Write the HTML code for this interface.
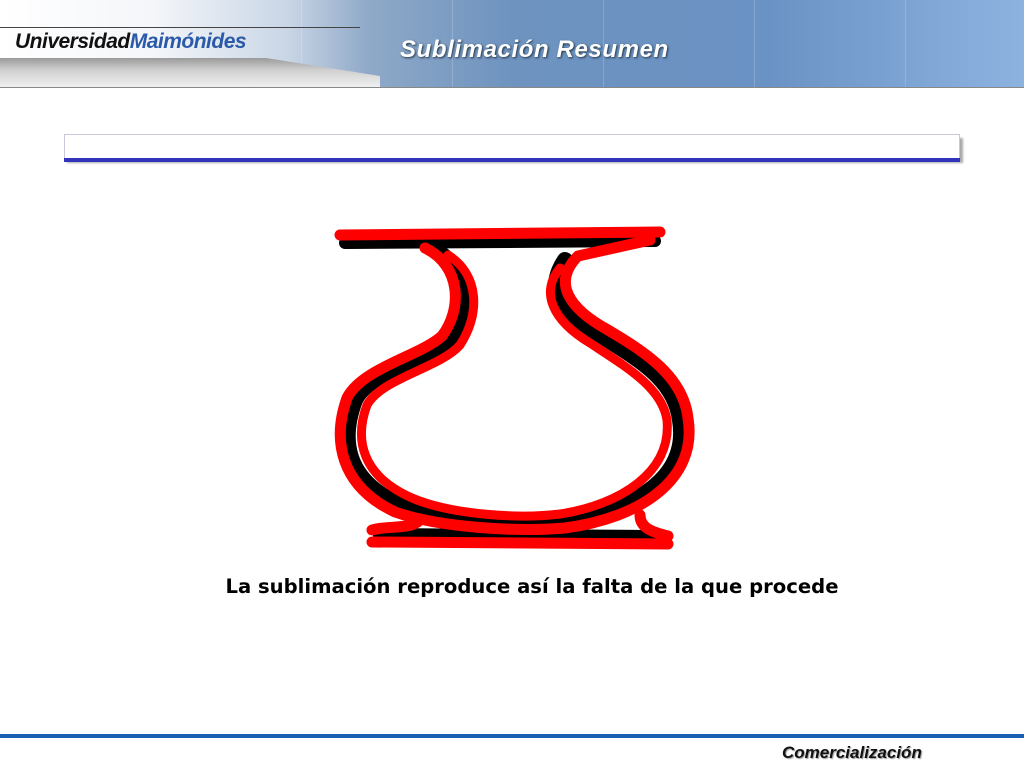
<!DOCTYPE html>
<html><head><meta charset="utf-8"><style>
html,body{margin:0;padding:0;width:1024px;height:768px;overflow:hidden;background:#fff;position:relative;font-family:"Liberation Sans",sans-serif}
.hdr{position:absolute;left:0;top:0;width:1024px;height:88px;background:linear-gradient(90deg,#fff 0%,#f4f6f9 15%,#c9d6e6 28%,#8fa9c8 36%,#6e93bf 50%,#6a92c4 75%,#8cb3e0 100%)}
.hdr .lines{position:absolute;inset:0;background:repeating-linear-gradient(90deg,transparent 0 150px,rgba(255,255,255,.18) 150px 151px)}
.swoosh{position:absolute;left:0;top:58px;width:380px;height:30px;background:linear-gradient(180deg,#9a9a9a 0%,#cfcfcf 40%,#f2f2f2 100%);clip-path:polygon(0 0,70% 0,100% 60%,100% 100%,0 100%)}
.hl{position:absolute;left:0;top:27px;width:360px;height:1px;background:#444}
.hb{position:absolute;left:0;top:87px;width:1024px;height:1px;background:#888}
.logo{position:absolute;left:15px;top:30px;font-size:21px;font-weight:bold;font-style:italic;letter-spacing:-0.5px;color:#111}
.logo span{color:#2a5aa8}
.title{position:absolute;left:400px;top:36px;font-size:24px;font-weight:bold;font-style:italic;letter-spacing:0.6px;color:#fff;text-shadow:1px 1px 2px #234}
.bar{position:absolute;left:64px;top:134px;width:894px;height:24px;border:1px solid #c8c8dc;border-bottom:none;background:#fff;box-shadow:3px 4px 2px #aaa}
.bar2{position:absolute;left:64px;top:158px;width:896px;height:4px;background:#3333bb}
.cap{position:absolute;left:200px;width:664px;top:575px;text-align:center;font-family:"DejaVu Sans","Liberation Sans",sans-serif;font-size:19.6px;font-weight:bold;color:#000;white-space:nowrap}
.fl{position:absolute;left:0;top:734px;width:1024px;height:4px;background:#1a5fb4}
.ft{position:absolute;left:782px;top:743px;font-size:17px;font-weight:bold;font-style:italic;color:#111;text-shadow:1px 1px 1px #999}
</style></head><body>
<div class="hdr"><div class="lines"></div></div>
<div class="swoosh"></div><div class="hl"></div><div class="hb"></div>
<div class="logo">Universidad<span>Maimónides</span></div>
<div class="title">Sublimación Resumen</div>
<div class="bar"></div><div class="bar2"></div>
<svg style="position:absolute;left:0;top:0" width="1024" height="768">
<g fill="none" stroke-linejoin="round" stroke-linecap="round">
<path d="M345 243 L655 241" stroke="#000" stroke-width="12"/>
<path d="M435 250 C470 270 470 310 450 340 C430 360 370 370 355 400 C340 440 345 480 400 505 C440 522 520 527 560 522 C630 512 690 480 680 420 C675 380 640 360 600 335 C560 315 545 290 565 260" stroke="#000" stroke-width="16"/>
<path d="M380 535 L650 537" stroke="#000" stroke-width="14"/>
<path d="M340 235 L660 232" stroke="red" stroke-width="11"/>
<path d="M425 248 C462 266 462 310 442 336 C420 356 362 368 347 398 C332 440 340 486 395 512 C440 528 520 532 565 528 C640 518 698 480 688 418 C683 376 645 352 608 330 C568 308 552 282 578 256 L650 240" stroke="red" stroke-width="11"/>
<path d="M448 255 C480 275 480 315 460 345 C440 368 382 378 367 405 C354 440 362 476 412 498 C452 515 520 519 560 514 C620 505 672 472 667 420 C662 388 628 368 590 343 C552 320 540 292 560 268" stroke="red" stroke-width="9"/>
<path d="M372 542 L668 544 M372 530 C390 525 410 530 420 520 M640 515 C640 528 652 532 668 536" stroke="red" stroke-width="11"/>
</g></svg>
<div class="cap">La sublimación reproduce así la falta de la que procede</div>
<div class="fl"></div>
<div class="ft">Comercialización</div>
</body></html>
